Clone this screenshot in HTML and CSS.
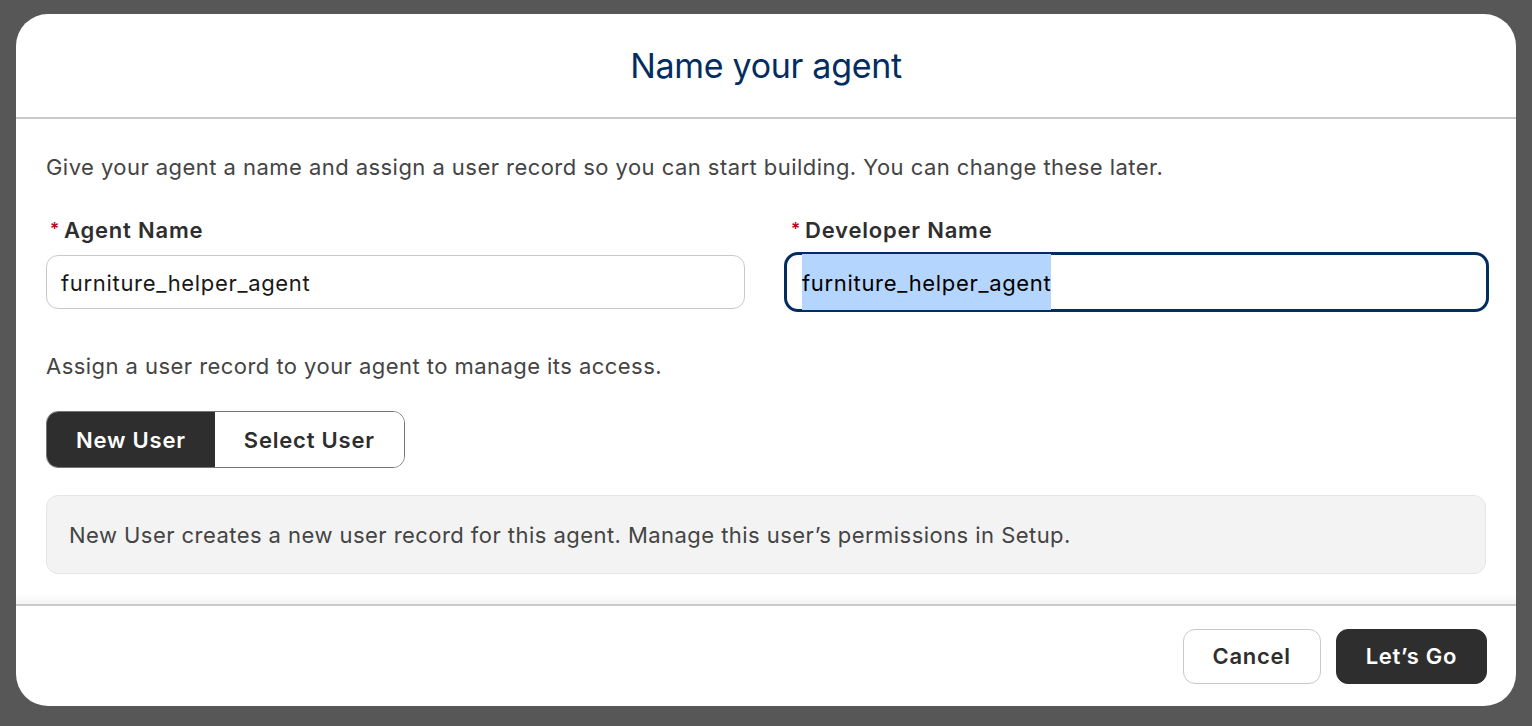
FILE: index.html
```html
<!DOCTYPE html>
<html>
  <head>
    <title>Name your agent</title>
    <link rel="stylesheet" href="styles.css">
  </head>
  <body>
    <div class="modal">
      <div class="modal-header">
        <h1>Name your agent</h1>
      </div>
      <div class="modal-body">
        <p class="intro">
          Give your agent a name and assign a user record so you can start building. You can change these later.
        </p>
        <div class="fields">
          <div class="field">
            <label><span class="req">*</span>Agent Name</label>
            <div class="input">furniture_helper_agent</div>
          </div>
          <div class="field">
            <label><span class="req">*</span>Developer Name</label>
            <div class="input focused"><span class="selected">furniture_helper_agent</span></div>
          </div>
        </div>
        <p class="assign">Assign a user record to your agent to manage its access.</p>
        <div class="toggle">
          <button class="toggle-btn active">New User</button>
          <button class="toggle-btn">Select User</button>
        </div>
        <div class="info">
          New User creates a new user record for this agent. Manage this user’s permissions in Setup.
        </div>
      </div>
      <div class="modal-footer">
        <button class="btn">Cancel</button>
        <button class="btn btn-dark">Let’s Go</button>
      </div>
    </div>
  </body>
</html>
```

FILE: styles.css
```css
html,
body {
  margin: 0;
  height: 100%;
}

body {
  background-color: #575757;
  font-family: Inter, "Noto Sans", sans-serif;
  padding: 14px 16px 20px 16px;
  box-sizing: border-box;
}

.modal {
  background-color: #fff;
  border-radius: 32px;
  height: 692px;
  display: flex;
  flex-direction: column;
  overflow: hidden;
}

.modal-header {
  height: 103px;
  border-bottom: 2px solid #c9c9c9;
  display: flex;
  align-items: center;
  justify-content: center;
}

.modal-header h1 {
  margin: 0;
  font-size: 34px;
  font-weight: 400;
  color: #032d60;
  letter-spacing: -0.3px;
}

.modal-body {
  padding: 0 30px 0 30px;
  flex: 1;
  box-shadow: inset 0 -14px 10px -10px rgba(0, 0, 0, 0.06);
}

.intro,
.assign {
  margin: 0;
  font-size: 22px;
  letter-spacing: 0.45px;
  color: #444;
}

.intro {
  padding-top: 33px;
  line-height: 30px;
}

.fields {
  display: grid;
  grid-template-columns: 1fr 1fr;
  column-gap: 42px;
  margin-top: 34px;
}

.field label {
  display: block;
  font-size: 22px;
  font-weight: 600;
  letter-spacing: 0.8px;
  color: #2e2e2e;
  height: 32px;
  line-height: 26px;
  margin-bottom: 7px;
}

.req {
  color: #ba0517;
  font-size: 17px;
  margin: 0 4px 0 4px;
  vertical-align: 3px;
}

.input {
  height: 54px;
  border: 1px solid #c9c9c9;
  border-radius: 12px;
  box-sizing: border-box;
  display: flex;
  align-items: center;
  padding: 2px 14px 0 14px;
  font-size: 22px;
  letter-spacing: 0.68px;
  color: #181818;
}

.input.focused {
  border: 3px solid #032d60;
  height: 60px;
  margin: -3px -3px 0 -3px;
  padding: 0 15px;
  border-radius: 14px;
}

.selected {
  background-color: #b4d5fe;
  line-height: 54px;
  padding-top: 2px;
  color: #000;
}

.assign {
  margin-top: 39px;
  line-height: 30px;
}

.toggle {
  display: inline-flex;
  margin-top: 30px;
  border: 1px solid #747474;
  border-radius: 12px;
  overflow: hidden;
}

.toggle-btn {
  height: 55px;
  border: none;
  background-color: #fff;
  font-family: inherit;
  font-size: 22px;
  font-weight: 600;
  letter-spacing: 0.8px;
  color: #2e2e2e;
  padding: 0 29px;
}

.toggle-btn.active {
  background-color: #2e2e2e;
  color: #fff;
}

.info {
  margin-top: 27px;
  background-color: #f3f3f3;
  border: 1px solid #e5e5e5;
  border-radius: 12px;
  height: 79px;
  box-sizing: border-box;
  display: flex;
  align-items: center;
  padding: 0 22px;
  font-size: 22px;
  letter-spacing: 0.45px;
  color: #444;
}

.modal-footer {
  border-top: 2px solid #c9c9c9;
  height: 100px;
  display: flex;
  justify-content: flex-end;
  align-items: center;
  gap: 15px;
  padding: 0 29px 0 0;
}

.btn {
  height: 55px;
  border-radius: 12px;
  border: 1px solid #c9c9c9;
  background-color: #fff;
  font-family: inherit;
  font-size: 22px;
  font-weight: 600;
  letter-spacing: 0.7px;
  color: #2e2e2e;
  padding: 0 29px;
}

.btn-dark {
  background-color: #2e2e2e;
  border-color: #2e2e2e;
  color: #fff;
}
```
